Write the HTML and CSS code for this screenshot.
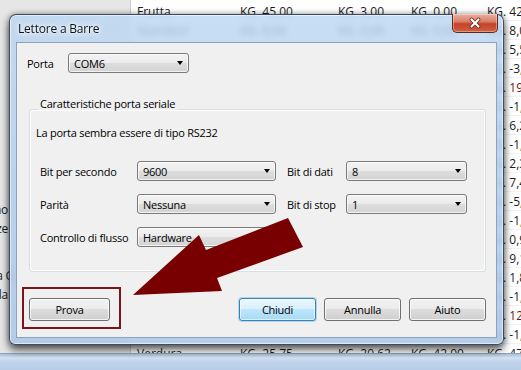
FILE: index.html
```html
<!DOCTYPE html>
<html lang="it">
<head>
    <meta charset="UTF-8">
    <title>Lettore a Barre</title>
    <link rel="stylesheet" href="styles.css">
</head>
<body>
    <div class="desktop">
        <div class="workspace">
            <div class="nav">
                <div class="nav-item"></div>
                <div class="nav-item"></div>
                <div class="nav-item"></div>
                <div class="nav-item"></div>
                <div class="nav-item"></div>
                <div class="nav-item"></div>
                <div class="nav-item"></div>
                <div class="nav-item"></div>
                <div class="nav-item"></div>
                <div class="nav-item"></div>
                <div class="nav-item">Magazzino</div>
                <div class="nav-item">Giacenze</div>
                <div class="nav-sep"></div>
                <div class="nav-item"></div>
                <div class="nav-item wide">Stampa G</div>
                <div class="nav-item">Cipolla</div>
                <div class="nav-item"></div>
            </div>
            <div class="table">
                <div class="row"><span>Frutta</span><span>KG. 45,00</span><span>KG. 3,00</span><span>KG. 0,00</span><span>KG. 42,00</span></div>
                <div class="row"><span>Standard</span><span>KG. 8,00</span><span>KG. 0,00</span><span>KG. 0,00</span><span>KG. 8,00</span></div>
                <div class="row"><span></span><span></span><span></span><span></span><span>KG. 5,50</span></div>
                <div class="row"><span></span><span></span><span></span><span></span><span>KG. -3,20</span></div>
                <div class="row"><span></span><span></span><span></span><span></span><span class="neg">KG. 19,00</span></div>
                <div class="row"><span></span><span></span><span></span><span></span><span>KG. -1,40</span></div>
                <div class="row"><span></span><span></span><span></span><span></span><span>KG. 6,25</span></div>
                <div class="row"><span></span><span></span><span></span><span></span><span>KG. -1,10</span></div>
                <div class="row"><span></span><span></span><span></span><span></span><span>KG. 2,30</span></div>
                <div class="row"><span></span><span></span><span></span><span></span><span>KG. 7,45</span></div>
                <div class="row"><span></span><span></span><span></span><span></span><span>KG. -5,60</span></div>
                <div class="row"><span></span><span></span><span></span><span></span><span>KG. -1,25</span></div>
                <div class="row"><span></span><span></span><span></span><span></span><span>KG. 0,90</span></div>
                <div class="row"><span></span><span></span><span></span><span></span><span>KG. 9,15</span></div>
                <div class="row"><span></span><span></span><span></span><span></span><span>KG. 1,80</span></div>
                <div class="row"><span></span><span></span><span></span><span></span><span>KG. -1,60</span></div>
                <div class="row"><span></span><span></span><span></span><span></span><span class="neg">KG. 12,40</span></div>
                <div class="row"><span></span><span></span><span></span><span></span><span>KG. -1,35</span></div>
                <div class="row"><span>Verdura</span><span>KG. 25,75</span><span>KG. 20,62</span><span>KG. 42,00</span><span>KG. 47,13</span></div>
            </div>
        </div>
        <div class="statusbar"></div>
    </div>

    <div class="dialog">
        <div class="titlebar">
            <span class="title">Lettore a Barre</span>
            <div class="close-btn">
                <svg width="14" height="12" viewBox="0 0 14 12">
                    <path d="M3.5 2.5 L10.5 9.5 M10.5 2.5 L3.5 9.5" stroke="#5a2318" stroke-width="3.6" stroke-linecap="round"/>
                    <path d="M3.5 2.5 L10.5 9.5 M10.5 2.5 L3.5 9.5" stroke="#fff" stroke-width="2.2" stroke-linecap="round"/>
                </svg>
            </div>
        </div>
        <div class="client">
            <div class="port-row">
                <span class="port-label">Porta</span>
                <div class="combo combo-port">COM6</div>
            </div>

            <fieldset class="group">
                <legend>Caratteristiche porta seriale</legend>
                <p class="info">La porta sembra essere di tipo RS232</p>
                <div class="settings">
                    <span>Bit per secondo</span>
                    <div class="combo combo-wide">9600</div>
                    <span class="label-right">Bit di dati</span>
                    <div class="combo">8</div>

                    <span>Parità</span>
                    <div class="combo combo-wide">Nessuna</div>
                    <span class="label-right">Bit di stop</span>
                    <div class="combo">1</div>

                    <span>Controllo di flusso</span>
                    <div class="combo combo-wide">Hardware</div>
                </div>
            </fieldset>

            <div class="buttons">
                <button class="btn btn-test">Prova</button>
                <div class="btn-group">
                    <button class="btn btn-default">Chiudi</button>
                    <button class="btn">Annulla</button>
                    <button class="btn">Aiuto</button>
                </div>
            </div>
        </div>
    </div>

    <svg class="annotation" width="521" height="370" viewBox="0 0 521 370">
        <polygon points="133,295 199,235 206,250 288,218 303,247 217,278 222,291" fill="#780000"/>
        <rect x="23" y="288" width="97" height="40" fill="none" stroke="#7d1416" stroke-width="2"/>
    </svg>
</body>
</html>
```

FILE: styles.css
```css
* {
    box-sizing: border-box;
}

body {
    margin: 0;
    width: 521px;
    height: 370px;
    overflow: hidden;
    position: relative;
    font-family: 'Open Sans', 'Noto Sans', sans-serif;
    font-size: 11px;
    letter-spacing: -0.25px;
    color: #000;
    background-color: #fff;
}

/* background application */
.desktop {
    height: 370px;
    display: flex;
    flex-direction: column;
}

.workspace {
    flex: 1;
    display: grid;
    grid-template-columns: 131px 1fr;
    overflow: hidden;
}

.nav {
    background-color: #e6e6e6;
    border-right: 1px solid #cdcdcd;
    padding-top: 10px;
}

.nav-item {
    height: 19px;
    width: 8px;
    display: flex;
    align-items: center;
    justify-content: flex-end;
    overflow: hidden;
    white-space: nowrap;
    font-size: 12px;
    color: #222;
}

.nav-item.wide {
    width: 14px;
}

.nav-sep {
    height: 9px;
}

.table {
    padding-top: 2px;
    font-size: 12px;
    letter-spacing: 0;
    color: #1c1c1c;
}

.row {
    height: 19px;
    display: grid;
    grid-template-columns: 103px 98px 73px 76px 1fr;
    align-items: center;
    white-space: nowrap;
    border-bottom: 1px solid #f2f2f2;
}

.row span {
    padding-left: 6px;
    overflow: hidden;
}

.row .neg {
    color: #7a1010;
}

.statusbar {
    height: 17px;
    background: linear-gradient(#aebfd4, #d4e2f3 25%, #bfd3ec 45%, #b8cde7);
    border-top: 1px solid #8fa5c0;
}

/* dialog window */
.dialog {
    position: absolute;
    left: 9px;
    top: 14px;
    width: 495px;
    height: 331px;
    display: flex;
    flex-direction: column;
    padding: 0 6px 6px;
    border: 1px solid rgba(38, 52, 70, 0.85);
    border-radius: 7px 7px 6px 6px;
    background: linear-gradient(rgba(186, 214, 242, 0.8), rgba(172, 200, 232, 0.88));
    backdrop-filter: blur(3px);
    box-shadow: inset 0 0 0 1px rgba(255, 255, 255, 0.55), 0 5px 9px rgba(0, 0, 0, 0.6), 0 0 6px rgba(0, 0, 0, 0.35);
}

.titlebar {
    height: 27px;
    display: flex;
    justify-content: space-between;
    align-items: flex-start;
}

.title {
    padding: 6px 0 0 2px;
    font-size: 12px;
    line-height: 16px;
    letter-spacing: -0.2px;
    color: #111;
    text-shadow: 0 0 6px #fff, 0 0 3px #fff;
}

.close-btn {
    width: 46px;
    height: 19px;
    margin: -1px -1px 0 0;
    display: flex;
    align-items: center;
    justify-content: center;
    border: 1px solid #5e2a22;
    border-top: none;
    border-radius: 0 0 5px 5px;
    background: linear-gradient(#eab0a2, #d97d68 42%, #c4432b 55%, #d0603f);
    box-shadow: inset 0 0 0 1px rgba(255, 255, 255, 0.35);
}

.client {
    flex: 1;
    display: flex;
    flex-direction: column;
    padding: 10px 10px 0;
    background-color: #f0f0f0;
    border: 1px solid #8ba3bf;
}

.port-row {
    display: flex;
    align-items: center;
    height: 20px;
}

.port-label {
    width: 41px;
}

/* readonly combo box */
.combo {
    width: 121px;
    height: 20px;
    display: flex;
    align-items: center;
    justify-content: space-between;
    padding: 0 5px 0 5px;
    border: 1px solid #7a7a7a;
    border-radius: 3px;
    background: linear-gradient(#f3f3f3, #ebebeb 50%, #dedede 50%, #d3d3d3);
    box-shadow: inset 0 0 0 1px rgba(255, 255, 255, 0.7);
}

.combo::after {
    content: "";
    border-left: 3.5px solid transparent;
    border-right: 3.5px solid transparent;
    border-top: 4px solid #000;
}

.combo-wide {
    width: 139px;
}

/* group box */
.group {
    margin: 24px 0 0 2px;
    padding: 0 0 24px 6px;
    border: 1px solid #d5dfe5;
    border-radius: 3px;
    box-shadow: inset 0 0 0 1px #fff;
}

.group legend {
    margin-left: 2px;
    padding: 0 2px 10px;
    line-height: 14px;
}

.info {
    margin: 4px 0 0;
    line-height: 15px;
}

.settings {
    margin: 21px 0 0 4px;
    display: grid;
    grid-template-columns: 97px 139px 70px 121px;
    grid-auto-rows: 20px;
    row-gap: 13px;
    align-items: center;
}

.label-right {
    padding-left: 11px;
}

/* buttons */
.buttons {
    margin-top: 26px;
    display: flex;
    justify-content: space-between;
    padding-left: 2px;
}

.btn-group {
    display: flex;
    gap: 8px;
}

.btn {
    width: 77px;
    height: 23px;
    padding: 0;
    font-family: inherit;
    font-size: 11px;
    letter-spacing: -0.25px;
    color: #000;
    border: 1px solid #707070;
    border-radius: 3px;
    background: linear-gradient(#f2f2f2, #ebebeb 50%, #dddddd 50%, #cfcfcf);
    box-shadow: inset 0 0 0 1px rgba(255, 255, 255, 0.75);
}

.btn-test {
    width: 81px;
}

.btn-default {
    border-color: #3c7fb1;
    background: linear-gradient(#eaf6fd, #d9f0fc 50%, #bee6fd 50%, #a7d9f5);
    box-shadow: inset 0 0 0 1px rgba(255, 255, 255, 0.6), 0 0 0 1px rgba(110, 190, 235, 0.5);
}

/* annotation drawn over the screenshot */
.annotation {
    position: absolute;
    left: 0;
    top: 0;
    pointer-events: none;
}
```
